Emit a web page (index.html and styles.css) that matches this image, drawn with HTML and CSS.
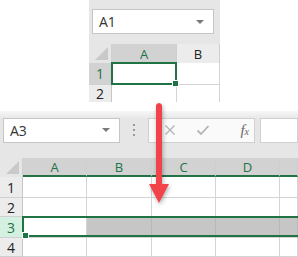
FILE: index.html
```html
<!DOCTYPE html>
<html>
<head>
    <meta charset="UTF-8">
    <title>Select row</title>
    <link rel="stylesheet" href="styles.css">
</head>
<body>
    <div class="page">
        <div class="shot shot-top">
            <div class="toolbar">
                <div class="namebox">
                    <span>A1</span>
                    <span class="caret"></span>
                </div>
            </div>
            <div class="sheet sheet-top">
                <div class="corner"></div>
                <div class="colhead sel">A</div>
                <div class="colhead">B</div>

                <div class="rowhead sel">1</div>
                <div class="cell"></div>
                <div class="cell"></div>

                <div class="rowhead">2</div>
                <div class="cell"></div>
                <div class="cell"></div>

                <div class="active-a1"><span class="handle"></span></div>
            </div>
        </div>

        <div class="shot shot-bottom">
            <div class="toolbar">
                <div class="namebox">
                    <span>A3</span>
                    <span class="caret"></span>
                </div>
                <div class="dots"><i></i><i></i><i></i></div>
                <div class="fxbox">
                    <svg class="ico" width="12" height="12" viewBox="0 0 12 12">
                        <path d="M1.5 1.5 L10.5 10.5 M10.5 1.5 L1.5 10.5" stroke="#b4b4b4" stroke-width="1.4" fill="none"/>
                    </svg>
                    <svg class="ico" width="14" height="12" viewBox="0 0 14 12">
                        <path d="M1.5 6.5 L5 10 L12.5 2" stroke="#b4b4b4" stroke-width="1.8" fill="none"/>
                    </svg>
                    <span class="fx">f<sub>x</sub></span>
                </div>
                <div class="formula"></div>
            </div>
            <div class="sheet sheet-bottom">
                <div class="corner"></div>
                <div class="colhead sel">A</div>
                <div class="colhead sel">B</div>
                <div class="colhead sel">C</div>
                <div class="colhead sel">D</div>
                <div class="colhead sel"></div>

                <div class="rowhead">1</div>
                <div class="cell"></div><div class="cell"></div><div class="cell"></div><div class="cell"></div><div class="cell"></div>

                <div class="rowhead">2</div>
                <div class="cell"></div><div class="cell"></div><div class="cell"></div><div class="cell"></div><div class="cell"></div>

                <div class="rowhead sel-row">3</div>
                <div class="cell row-sel"></div><div class="cell row-sel dim"></div><div class="cell row-sel dim"></div><div class="cell row-sel dim"></div><div class="cell row-sel dim"></div>

                <div class="rowhead">4</div>
                <div class="cell"></div><div class="cell"></div><div class="cell"></div><div class="cell"></div><div class="cell"></div>

                <div class="active-row"><span class="handle"></span></div>
            </div>
        </div>

        <svg class="arrow" width="24" height="106" viewBox="0 0 24 106">
            <path d="M9 4 Q12 0 15 4 L15 83 L22 83 L12 102 L2 83 L9 83 Z" fill="#f2434a"/>
        </svg>
    </div>
</body>
</html>
```

FILE: styles.css
```css
html, body {
    margin: 0;
    padding: 0;
    background: #fff;
}
body {
    font-family: "Open Sans", "Noto Sans", sans-serif;
    width: 298px;
    height: 257px;
    overflow: hidden;
}
.page {
    position: relative;
    display: flex;
    flex-direction: column;
    gap: 9px;
}
.shot {
    overflow: hidden;
    background: #e6e6e6;
}
.shot-top {
    margin-left: 89px;
    width: 131px;
    height: 102px;
}
.shot-bottom {
    width: 298px;
    height: 146px;
    background: linear-gradient(#f7f7f7, #e6e6e6 8px);
}

/* name box / formula bar */
.toolbar {
    display: flex;
    align-items: center;
    padding-left: 3px;
}
.shot-top .toolbar {
    height: 44px;
    padding-bottom: 1px;
    box-sizing: border-box;
}
.shot-bottom .toolbar {
    height: 47px;
    padding-bottom: 10px;
    padding-top: 1px;
    box-sizing: border-box;
}
.namebox {
    box-sizing: border-box;
    height: 25px;
    background: #fff;
    border: 1px solid #c6c6c6;
    display: flex;
    align-items: center;
    justify-content: space-between;
    padding: 0 9px 0 6px;
    font-size: 14px;
    color: #333;
}
.shot-top .namebox {
    width: 122px;
}
.shot-bottom .namebox {
    width: 121px;
}
.caret {
    width: 0;
    height: 0;
    border-left: 4px solid transparent;
    border-right: 4px solid transparent;
    border-top: 4px solid #7a7a7a;
}
.dots {
    width: 30px;
    display: flex;
    flex-direction: column;
    align-items: center;
    gap: 3px;
}
.dots i {
    width: 2px;
    height: 2px;
    background: #9a9a9a;
}
.fxbox {
    box-sizing: border-box;
    width: 110px;
    height: 25px;
    background: #fafafa;
    border: 1px solid #d0d0d0;
    display: flex;
    align-items: center;
    padding-left: 15px;
    gap: 20px;
}
.fx {
    margin-left: 10px;
    font-family: "Liberation Serif", serif;
    font-style: italic;
    font-size: 15px;
    color: #666;
}
.fx sub {
    font-size: 10px;
    vertical-align: 0;
}
.formula {
    box-sizing: border-box;
    margin-left: 5px;
    width: 40px;
    height: 25px;
    background: #fff;
    border: 1px solid #d0d0d0;
}

/* grid */
.sheet {
    position: relative;
    display: grid;
    font-size: 13px;
    color: #333;
}
.sheet-top {
    grid-template-columns: 23px 65px 43px;
    grid-template-rows: 19px 22px 18px;
}
.sheet-bottom {
    grid-template-columns: 23px 64px 65px 64px 64px 18px;
    grid-template-rows: 19px 21px 19px 21px 19px;
}
.corner {
    background: #e6e6e6;
    border-right: 1px solid #d0d0d0;
    position: relative;
}
.corner::after {
    content: "";
    position: absolute;
    right: 3px;
    bottom: 3px;
    border-left: 13px solid transparent;
    border-bottom: 13px solid #c9c9c9;
}
.colhead {
    background: #ececec;
    border-right: 1px solid #cfcfcf;
    display: flex;
    align-items: center;
    justify-content: center;
    color: #222;
}
.colhead.sel {
    background: #d2d2d2;
    color: #217346;
}
.sheet-bottom .colhead {
    border-bottom: 2px solid #217346;
}
.rowhead {
    background: #ececec;
    border-bottom: 1px solid #d0d0d0;
    border-right: 1px solid #c6c6c6;
    display: flex;
    align-items: center;
    justify-content: center;
    color: #222;
    font-size: 14px;
}
.rowhead.sel {
    background: #d2d2d2;
    color: #217346;
}
.rowhead.sel-row {
    background: #d3f0e0;
    color: #217346;
}
.cell {
    background: #fff;
    border-right: 1px solid #d4d4d4;
    border-bottom: 1px solid #d4d4d4;
}
.cell.dim {
    background: #c6c6c6;
    border-right-color: #b8b8b8;
}

/* selection outlines */
.active-a1 {
    position: absolute;
    left: 22px;
    top: 18px;
    width: 62px;
    height: 19px;
    border: 2px solid #217346;
}
.active-row {
    position: absolute;
    left: 22px;
    top: 58px;
    width: 290px;
    height: 17px;
    border: 2px solid #217346;
}
.handle {
    position: absolute;
    width: 5px;
    height: 5px;
    background: #217346;
    border: 1px solid #fff;
}
.active-a1 .handle {
    right: -4px;
    bottom: -4px;
}
.active-row .handle {
    left: -2px;
    bottom: -4px;
    border-color: #fff;
}

.arrow {
    position: absolute;
    left: 147px;
    top: 101px;
    filter: drop-shadow(1px 2px 2px rgba(0, 0, 0, 0.3));
}
```
